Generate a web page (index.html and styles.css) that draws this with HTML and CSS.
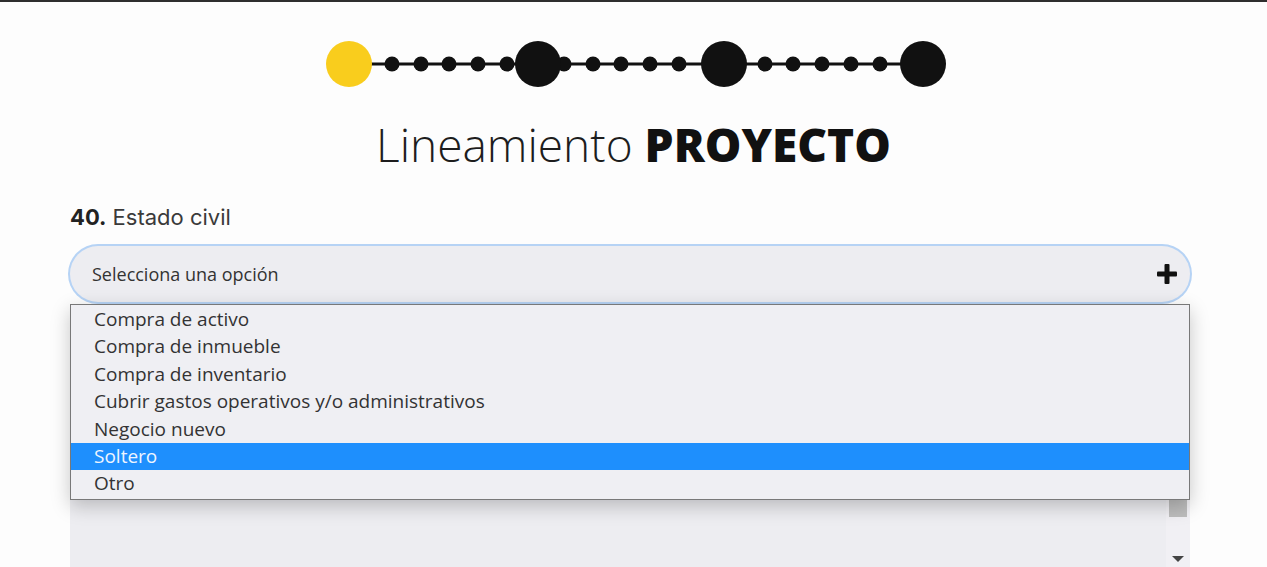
FILE: index.html
```html
<!DOCTYPE html>
<html lang="es">
<head>
  <meta charset="UTF-8" />
  <meta name="viewport" content="width=device-width, initial-scale=1.0"/>
  <title>Lineamiento Proyecto</title>
  <link rel="stylesheet" href="styles.css">
</head>
<body>
  <div class="topbar"></div>

  <div class="steps">
    <svg width="624" height="48" viewBox="0 0 624 48">
      <line x1="24" y1="24" x2="598" y2="24" stroke="#111" stroke-width="3"/>
      <circle cx="68" cy="24" r="7.5" fill="#111"/>
      <circle cx="97" cy="24" r="7.5" fill="#111"/>
      <circle cx="125" cy="24" r="7.5" fill="#111"/>
      <circle cx="154" cy="24" r="7.5" fill="#111"/>
      <circle cx="183" cy="24" r="7.5" fill="#111"/>
      <circle cx="240" cy="24" r="7.5" fill="#111"/>
      <circle cx="269" cy="24" r="7.5" fill="#111"/>
      <circle cx="297" cy="24" r="7.5" fill="#111"/>
      <circle cx="326" cy="24" r="7.5" fill="#111"/>
      <circle cx="355" cy="24" r="7.5" fill="#111"/>
      <circle cx="441" cy="24" r="7.5" fill="#111"/>
      <circle cx="469" cy="24" r="7.5" fill="#111"/>
      <circle cx="498" cy="24" r="7.5" fill="#111"/>
      <circle cx="527" cy="24" r="7.5" fill="#111"/>
      <circle cx="556" cy="24" r="7.5" fill="#111"/>
      <circle cx="25" cy="24" r="23" fill="#f9cd1d"/>
      <circle cx="214" cy="24" r="23" fill="#111"/>
      <circle cx="400" cy="24" r="23" fill="#111"/>
      <circle cx="599" cy="24" r="23" fill="#111"/>
    </svg>
  </div>

  <h1 class="title">Lineamiento <strong>PROYECTO</strong></h1>

  <div class="question">
    <label class="question-label"><b>40.</b> Estado civil</label>

    <div class="field">
      <div class="select-bar">
        <span>Selecciona una opción</span>
        <svg class="plus" width="22" height="22" viewBox="0 0 22 22">
          <rect x="8.5" y="1" width="5" height="20" rx="1" fill="#111"/>
          <rect x="1" y="8.5" width="20" height="5" rx="1" fill="#111"/>
        </svg>
      </div>

      <div class="listbox">
        <div class="scroll-track">
          <div class="scroll-thumb"></div>
          <div class="scroll-arrow"></div>
        </div>
      </div>

      <ul class="menu">
        <li>Compra de activo</li>
        <li>Compra de inmueble</li>
        <li>Compra de inventario</li>
        <li>Cubrir gastos operativos y/o administrativos</li>
        <li>Negocio nuevo</li>
        <li class="selected">Soltero</li>
        <li>Otro</li>
      </ul>
    </div>
  </div>
</body>
</html>
```

FILE: styles.css
```css
* {
  margin: 0;
  padding: 0;
  box-sizing: border-box;
}

body {
  background-color: #fdfdfd;
  font-family: 'Open Sans', 'Liberation Sans', sans-serif;
  color: #333;
  height: 567px;
  overflow: hidden;
}

.topbar {
  height: 2px;
  background: #2e2e2e;
}

.steps {
  display: flex;
  justify-content: center;
  margin-top: 38px;
  padding-left: 5px;
}

.steps svg {
  display: block;
}

.title {
  text-align: center;
  font-size: 46px;
  line-height: 64px;
  font-weight: 300;
  color: #1d1d1d;
  margin-top: 24px;
}

.title strong {
  font-weight: 800;
  color: #111;
}

.question {
  margin: 28px 77px 0 70px;
}

.question-label {
  display: block;
  font-family: 'Inter', 'Open Sans', sans-serif;
  font-size: 22px;
  line-height: 26px;
  color: #3a3a3a;
}

.question-label b {
  font-weight: 700;
  color: #222;
}

.field {
  position: relative;
  margin-top: 16px;
}

.select-bar {
  display: flex;
  align-items: center;
  justify-content: space-between;
  height: 56px;
  padding: 0 12px 0 22px;
  background: #ededf1;
  border-radius: 29px;
  box-shadow: 0 0 0 2px #b6d3f5;
  font-size: 18px;
  color: #333;
}

.listbox {
  height: 260px;
  margin-top: 14px;
  background: #ededf1;
  display: flex;
  justify-content: flex-end;
}

.scroll-track {
  position: relative;
  width: 24px;
  background: #f1f0f4;
}

.scroll-thumb {
  position: absolute;
  left: 3px;
  top: 183px;
  width: 18px;
  height: 18px;
  background: #bdbdbd;
}

.scroll-arrow {
  position: absolute;
  left: 6px;
  top: 240px;
  border-left: 6px solid transparent;
  border-right: 6px solid transparent;
  border-top: 6px solid #444;
}

.menu {
  position: absolute;
  top: 58px;
  left: 0;
  right: 0;
  list-style: none;
  background: #efeff3;
  border: 1px solid #787878;
  padding: 1px 0;
  box-shadow: 0 6px 18px rgba(0, 0, 0, 0.22);
}

.menu li {
  height: 27.4px;
  line-height: 27px;
  padding-left: 23px;
  font-size: 19px;
  color: #333;
}

.menu li.selected {
  background: #1e8ffd;
  color: #eef5ff;
}
```
